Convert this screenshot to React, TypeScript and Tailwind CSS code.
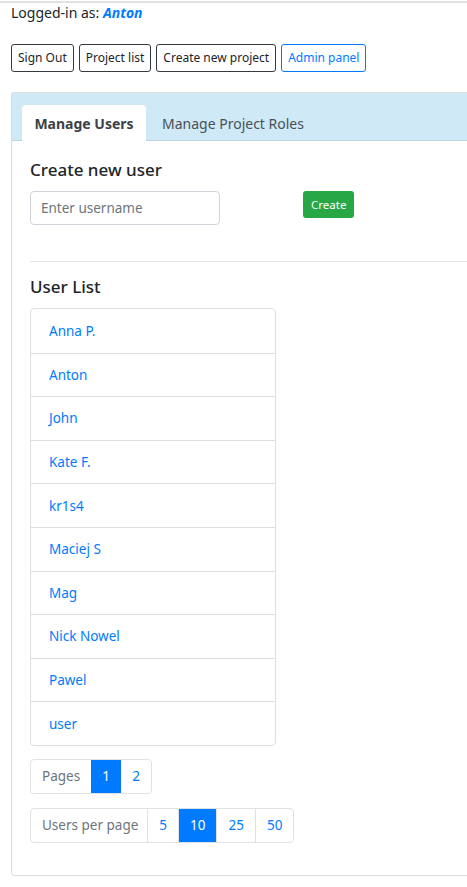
import React, { useState } from 'react';

const USERS = ['Anna P.', 'Anton', 'John', 'Kate F.', 'kr1s4', 'Maciej S', 'Mag', 'Nick Nowel', 'Pawel', 'user'];

export default function App() {
    const [tab, setTab] = useState<'users' | 'roles'>('users');
    const [page, setPage] = useState(1);
    const [perPage, setPerPage] = useState(10);

    return (
        <div className="w-[467px] h-[887px] overflow-hidden bg-white text-[#212529]" style={{ fontFamily: '"Noto Sans", "Open Sans", sans-serif' }}>
            <div className="border-t-2 border-[#e2e2e2] mt-[1px] pl-[11px]">
                <p className="text-[14px] leading-[20px]">
                    Logged-in as: <span className="font-bold italic text-[#007bff]">Anton</span>
                </p>

                {/* Nav buttons */}
                <div className="flex gap-[5px] mt-[21px]">
                    <button className="h-[28px] px-[6px] border border-[#343a40] rounded-[3px] text-[12px]">Sign Out</button>
                    <button className="h-[28px] px-[6px] border border-[#343a40] rounded-[3px] text-[12px]">Project list</button>
                    <button className="h-[28px] px-[6px] border border-[#343a40] rounded-[3px] text-[12px]">Create new project</button>
                    <button className="h-[28px] px-[6px] border border-[#007bff] rounded-[3px] text-[12px] text-[#007bff]">Admin panel</button>
                </div>

                {/* Admin card */}
                <div className="mt-[20px] w-[480px] h-[784px] border border-[#dcdcdc] rounded-[3px]">
                    <div className="h-[48px] bg-[#cfe9f7] border-b border-[#b7d5e4] flex items-end pl-[10px]">
                        <button
                            onClick={() => setTab('users')}
                            className={`h-[36px] w-[124px] -mb-px rounded-t-[4px] text-[14px] ${tab === 'users' ? 'bg-white font-bold text-[#3c4148]' : 'text-[#495057]'}`}
                        >
                            Manage Users
                        </button>
                        <button
                            onClick={() => setTab('roles')}
                            className={`h-[36px] px-[16px] -mb-px rounded-t-[4px] text-[14px] ${tab === 'roles' ? 'bg-white font-bold text-[#3c4148]' : 'text-[#495057]'}`}
                        >
                            Manage Project Roles
                        </button>
                    </div>

                    <div className="pl-[18px] pt-[17px]">
                        <h3 className="text-[17px] leading-[24px] font-medium">Create new user</h3>
                        <div className="flex items-start mt-[9px]">
                            <input
                                placeholder="Enter username"
                                className="w-[190px] h-[34px] px-[10px] border border-[#ced4da] rounded-[4px] text-[13.5px] placeholder:text-[#6c757d] outline-none"
                            />
                            <button className="ml-[83px] h-[27px] px-[8px] bg-[#28a745] text-white rounded-[3px] text-[11.5px]">Create</button>
                        </div>

                        <hr className="mt-[36px] border-[#e5e5e5]" />

                        <h3 className="text-[17px] leading-[24px] font-medium mt-[13px]">User List</h3>
                        <ul className="mt-[9px] w-[246px] border border-[#dfdfdf] rounded-[4px]">
                            {USERS.map((u, i) => (
                                <li key={u} className={`h-[43.6px] flex items-center pl-[18px] text-[13.5px] text-[#007bff] ${i > 0 ? 'border-t border-[#dfdfdf]' : ''}`}>
                                    {u}
                                </li>
                            ))}
                        </ul>

                        {/* Pagination */}
                        <div className="mt-[13px] flex h-[35px] w-fit border border-[#dee2e6] rounded-[4px] text-[13.5px] overflow-hidden">
                            <span className="px-[11px] flex items-center text-[#6c757d]">Pages</span>
                            {[1, 2].map(p => (
                                <button
                                    key={p}
                                    onClick={() => setPage(p)}
                                    className={`w-[30px] ${page === p ? 'bg-[#007bff] text-white' : 'text-[#007bff]'}`}
                                >
                                    {p}
                                </button>
                            ))}
                        </div>

                        <div className="mt-[14px] flex h-[35px] w-fit border border-[#dee2e6] rounded-[4px] text-[13.5px] overflow-hidden">
                            <span className="pl-[11px] pr-[9px] flex items-center text-[#6c757d]">Users per page</span>
                            {[5, 10, 25, 50].map(n => (
                                <button
                                    key={n}
                                    onClick={() => setPerPage(n)}
                                    className={`px-[11px] border-l border-[#dee2e6] ${perPage === n ? 'bg-[#007bff] text-white border-[#007bff]' : 'text-[#007bff]'}`}
                                >
                                    {n}
                                </button>
                            ))}
                        </div>
                    </div>
                </div>
            </div>
        </div>
    );
}
